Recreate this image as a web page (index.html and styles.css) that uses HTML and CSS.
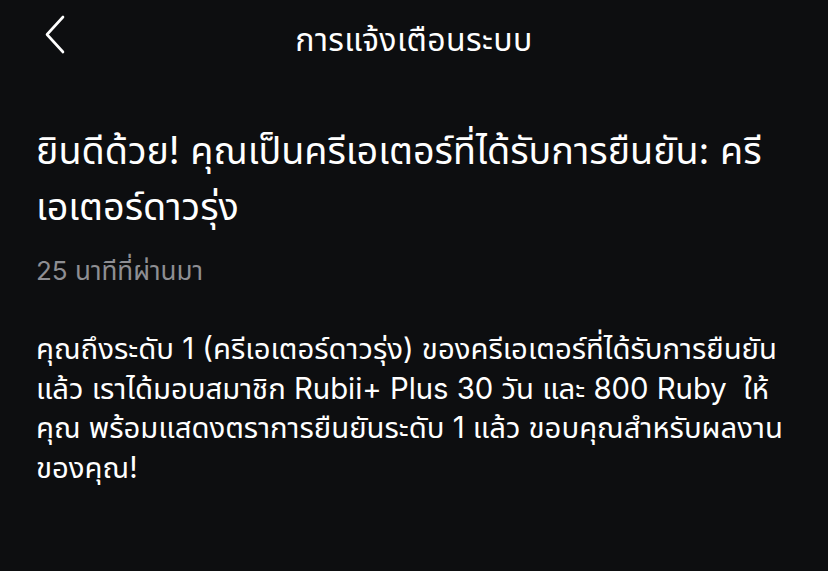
FILE: index.html
```html
<!DOCTYPE html>
<html lang="th">
<head>
<meta charset="utf-8">
<link rel="stylesheet" href="styles.css">
</head>
<body>
<div class="screen">
  <header class="nav">
    <button class="back" aria-label="back">
      <svg width="22" height="40" viewBox="0 0 22 40"><path d="M18 2 L2 19.5 L18 37" fill="none" stroke="#fff" stroke-width="2.6" stroke-linecap="round" stroke-linejoin="round"/></svg>
    </button>
    <h1 class="nav-title">การแจ้งเตือนระบบ</h1>
  </header>
  <main class="content">
    <h2 class="title"><span class="line">ยินดีด้วย! คุณเป็นครีเอเตอร์ที่ได้รับการยืนยัน: ครี</span><span class="line">เอเตอร์ดาวรุ่ง</span></h2>
    <div class="time">25 นาทีที่ผ่านมา</div>
    <p class="body"><span class="line">คุณถึงระดับ 1 (ครีเอเตอร์ดาวรุ่ง) ของครีเอเตอร์ที่ได้รับการยืนยัน</span><span class="line">แล้ว เราได้มอบสมาชิก Rubii+ Plus 30 วัน และ 800 Ruby&nbsp; ให้</span><span class="line">คุณ พร้อมแสดงตราการยืนยันระดับ 1 แล้ว ขอบคุณสำหรับผลงาน</span><span class="line">ของคุณ!</span></p>
  </main>
</div>
</body>
</html>
```
FILE: styles.css
```css
html, body {
  margin: 0;
  padding: 0;
  background: #0d0e10;
}
body {
  font-family: "Inter", "Noto Sans Thai", "Noto Sans", sans-serif;
  color: #ffffff;
  width: 828px;
  height: 571px;
  overflow: hidden;
}
.screen {
  display: flex;
  flex-direction: column;
}
.nav {
  position: relative;
  height: 80px;
  display: flex;
  align-items: center;
  justify-content: center;
}
.back {
  position: absolute;
  left: 45px;
  top: 15px;
  background: none;
  border: 0;
  padding: 0;
  display: flex;
}
.nav-title {
  margin: 0;
  font-size: 32px;
  font-weight: 400;
  letter-spacing: 0.4px;
  line-height: 40px;
}
.content {
  padding: 42px 38px 0 36px;
}
.line {
  display: block;
  white-space: nowrap;
}
.title {
  margin: 0;
  font-size: 37.7px;
  font-weight: 400;
  line-height: 56px;
}
.time {
  margin-top: 21px;
  font-size: 26px;
  color: #8e8e93;
  line-height: 32px;
}
.body {
  margin: 42px 0 0 0;
  font-size: 29.3px;
  line-height: 39.5px;
}
```
